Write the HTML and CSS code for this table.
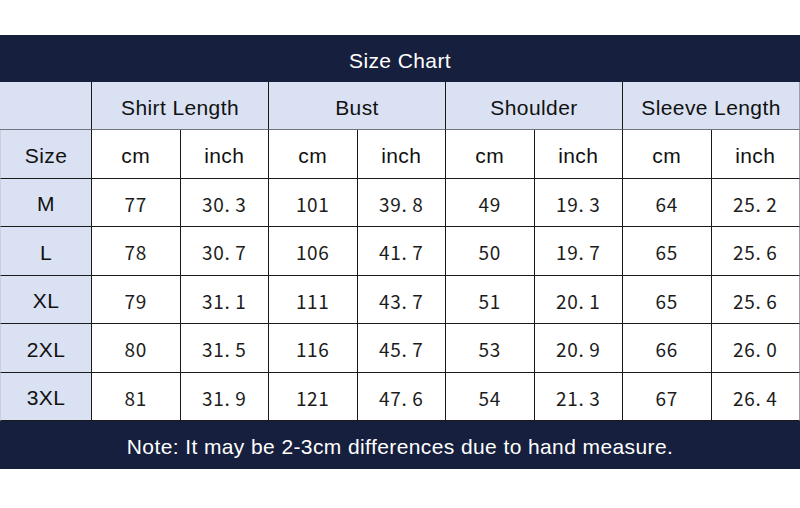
FILE: index.html
```html
<!DOCTYPE html>
<html>
<head>
<meta charset="utf-8">
<link rel="stylesheet" href="styles.css">
</head>
<body>
<div class="chart">
  <div class="bar title">Size Chart</div>
  <div class="grid">
    <div class="cell head"></div>
    <div class="cell head span2">Shirt Length</div>
    <div class="cell head span2">Bust</div>
    <div class="cell head span2">Shoulder</div>
    <div class="cell head span2 last">Sleeve Length</div>

    <div class="cell size">Size</div>
    <div class="cell lbl">cm</div><div class="cell lbl">inch</div>
    <div class="cell lbl">cm</div><div class="cell lbl">inch</div>
    <div class="cell lbl">cm</div><div class="cell lbl">inch</div>
    <div class="cell lbl">cm</div><div class="cell lbl last">inch</div>

    <div class="cell size">M</div>
    <div class="cell num">77</div><div class="cell num">30. 3</div>
    <div class="cell num">101</div><div class="cell num">39. 8</div>
    <div class="cell num">49</div><div class="cell num">19. 3</div>
    <div class="cell num">64</div><div class="cell num last">25. 2</div>

    <div class="cell size">L</div>
    <div class="cell num">78</div><div class="cell num">30. 7</div>
    <div class="cell num">106</div><div class="cell num">41. 7</div>
    <div class="cell num">50</div><div class="cell num">19. 7</div>
    <div class="cell num">65</div><div class="cell num last">25. 6</div>

    <div class="cell size">XL</div>
    <div class="cell num">79</div><div class="cell num">31. 1</div>
    <div class="cell num">111</div><div class="cell num">43. 7</div>
    <div class="cell num">51</div><div class="cell num">20. 1</div>
    <div class="cell num">65</div><div class="cell num last">25. 6</div>

    <div class="cell size">2XL</div>
    <div class="cell num">80</div><div class="cell num">31. 5</div>
    <div class="cell num">116</div><div class="cell num">45. 7</div>
    <div class="cell num">53</div><div class="cell num">20. 9</div>
    <div class="cell num">66</div><div class="cell num last">26. 0</div>

    <div class="cell size">3XL</div>
    <div class="cell num">81</div><div class="cell num">31. 9</div>
    <div class="cell num">121</div><div class="cell num">47. 6</div>
    <div class="cell num">54</div><div class="cell num">21. 3</div>
    <div class="cell num">67</div><div class="cell num last">26. 4</div>
  </div>
  <div class="bar note">Note: It may be 2-3cm differences due to hand measure.</div>
</div>
</body>
</html>
```
FILE: styles.css
```css
html, body {
  margin: 0;
  padding: 0;
  background: #ffffff;
}
body {
  font-family: "Liberation Sans", Arial, sans-serif;
  color: #111111;
}
.chart {
  margin-top: 35px;
  width: 800px;
}
.bar {
  box-sizing: border-box;
  background: #161f3d;
  color: #ffffff;
  display: flex;
  align-items: center;
  justify-content: center;
  font-size: 21px;
  letter-spacing: 0.4px;
  padding-top: 4px;
}
.title {
  height: 47px;
}
.note {
  height: 48px;
}
.grid {
  display: grid;
  grid-template-columns: 92px repeat(8, 88.5px);
  grid-template-rows: 48px repeat(6, 48.5px);
}
.cell {
  box-sizing: border-box;
  display: flex;
  align-items: center;
  justify-content: center;
  border-right: 1px solid #1a1a1a;
  border-bottom: 1px solid #1a1a1a;
  background: #ffffff;
  font-size: 21px;
  letter-spacing: 0.4px;
  padding-top: 4px;
}
.cell.last {
  border-right: 1px solid #9aa0ab;
}
.head {
  background: #d9e1f2;
  border-bottom-color: #6f7580;
}
.span2 {
  grid-column: span 2;
}
.size {
  background: #d9e1f2;
  border-left: 1px solid #c8cfdd;
}
.num {
  font-family: "Noto Sans CJK SC", "Liberation Sans", sans-serif;
  font-size: 19px;
  letter-spacing: 0.7px;
  padding-top: 2px;
  color: #1c1c1c;
  white-space: pre;
}
```
